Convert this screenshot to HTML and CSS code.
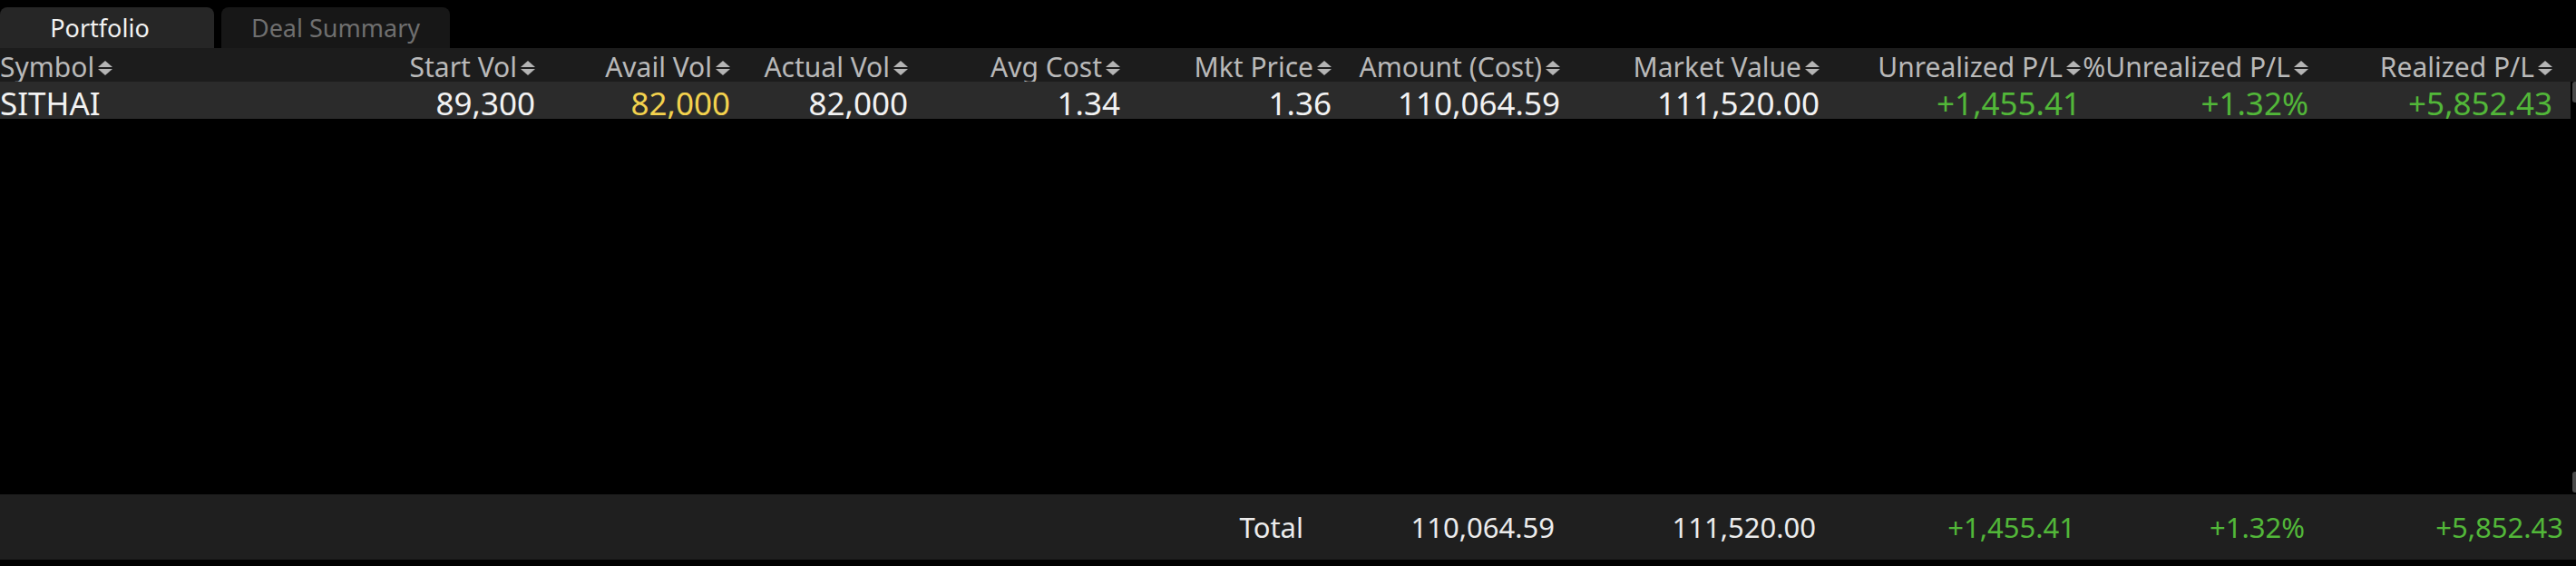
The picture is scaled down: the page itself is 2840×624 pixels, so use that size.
FILE: index.html
```html
<!DOCTYPE html>
<html lang="en">
<head>
<meta charset="utf-8">
<title>Portfolio</title>
<link rel="stylesheet" href="styles.css">
</head>
<body>
<div class="app">
  <div class="tabs">
    <div class="tab tab-active">Portfolio</div>
    <div class="tab">Deal Summary</div>
  </div>

  <div class="cols head">
    <div class="cell left">Symbol<span class="sort"><i class="up"></i><i class="down"></i></span></div>
    <div class="cell">Start Vol<span class="sort"><i class="up"></i><i class="down"></i></span></div>
    <div class="cell">Avail Vol<span class="sort"><i class="up"></i><i class="down"></i></span></div>
    <div class="cell">Actual Vol<span class="sort"><i class="up"></i><i class="down"></i></span></div>
    <div class="cell">Avg Cost<span class="sort"><i class="up"></i><i class="down"></i></span></div>
    <div class="cell">Mkt Price<span class="sort"><i class="up"></i><i class="down"></i></span></div>
    <div class="cell">Amount (Cost)<span class="sort"><i class="up"></i><i class="down"></i></span></div>
    <div class="cell">Market Value<span class="sort"><i class="up"></i><i class="down"></i></span></div>
    <div class="cell">Unrealized P/L<span class="sort"><i class="up"></i><i class="down"></i></span></div>
    <div class="cell">%Unrealized P/L<span class="sort"><i class="up"></i><i class="down"></i></span></div>
    <div class="cell">Realized P/L<span class="sort"><i class="up"></i><i class="down"></i></span></div>
    <div class="cell"></div>
  </div>

  <div class="body">
    <div class="rows">
      <div class="cols row">
        <div class="cell left">SITHAI</div>
        <div class="cell">89,300</div>
        <div class="cell yellow">82,000</div>
        <div class="cell">82,000</div>
        <div class="cell">1.34</div>
        <div class="cell">1.36</div>
        <div class="cell">110,064.59</div>
        <div class="cell">111,520.00</div>
        <div class="cell green">+1,455.41</div>
        <div class="cell green">+1.32%</div>
        <div class="cell green">+5,852.43</div>
        <div class="cell"></div>
      </div>
    </div>
    <div class="scrollbar">
      <div class="sb-btn sb-top"></div>
      <div class="sb-btn sb-bottom"></div>
    </div>
  </div>

  <div class="footer">
    <div class="fcell">Total</div>
    <div class="fcell">110,064.59</div>
    <div class="fcell">111,520.00</div>
    <div class="fcell green">+1,455.41</div>
    <div class="fcell green">+1.32%</div>
    <div class="fcell green">+5,852.43</div>
    <div class="fcell"></div>
  </div>
</div>
</body>
</html>
```
FILE: styles.css
```css
html, body {
  margin: 0;
  padding: 0;
  background: #000;
}

body {
  font-family: "Noto Sans", "Open Sans", sans-serif;
  color: #f0f0f0;
  width: 2840px;
  height: 624px;
  overflow: hidden;
}

.app {
  display: flex;
  flex-direction: column;
  padding-top: 8px;
}

/* Tabs */
.tabs {
  display: flex;
  gap: 8px;
  height: 45px;
}

.tab {
  width: 252px;
  display: flex;
  align-items: center;
  justify-content: center;
  font-size: 27px;
  color: #6f6f6f;
  background: #171717;
  border-radius: 8px 8px 0 0;
}

.tab-active {
  width: 236px;
  box-sizing: border-box;
  padding-right: 16px;
  color: #f2f2f2;
  background: #262626;
}

/* Column grid shared by header and rows */
.cols {
  display: grid;
  grid-template-columns: 375px 215px 215px 196px 234px 233px 252px 286px 288px 251px 269px 1fr;
}

.cell {
  display: flex;
  align-items: center;
  justify-content: flex-end;
  white-space: nowrap;
  min-width: 0;
}

.cell.left {
  justify-content: flex-start;
}

.head {
  height: 37px;
  background: #1c1c1c;
  font-size: 30px;
  color: #b9b9b9;
}

.sort {
  display: inline-flex;
  flex-direction: column;
  gap: 2px;
  margin-left: 4px;
  margin-top: 3px;
}

.sort i {
  display: block;
  width: 0;
  height: 0;
  border-left: 8px solid transparent;
  border-right: 8px solid transparent;
}

.sort .up {
  border-bottom: 7px solid #b4b4b4;
}

.sort .down {
  border-top: 7px solid #b4b4b4;
}

/* Body */
.body {
  display: flex;
  height: 455px;
}

.rows {
  flex: 1;
}

.row {
  height: 41px;
  background: #2b2b2b;
  font-size: 35px;
  color: #f2f2f2;
}

.scrollbar {
  width: 6px;
  display: flex;
  flex-direction: column;
  justify-content: space-between;
  align-items: flex-end;
  padding-bottom: 2px;
}

.sb-btn {
  width: 4px;
  height: 23px;
  background: #4a4a4a;
  border-radius: 3px 0 0 3px;
}

.yellow {
  color: #f3d24e;
}

.green {
  color: #52b739;
}

/* Footer */
.footer {
  display: grid;
  grid-template-columns: 1437px 277px 288px 286px 253px 285px 1fr;
  height: 72px;
  background: #1f1f1f;
  font-size: 31px;
  color: #ececec;
}

.fcell {
  display: flex;
  align-items: center;
  justify-content: flex-end;
  white-space: nowrap;
}
```
